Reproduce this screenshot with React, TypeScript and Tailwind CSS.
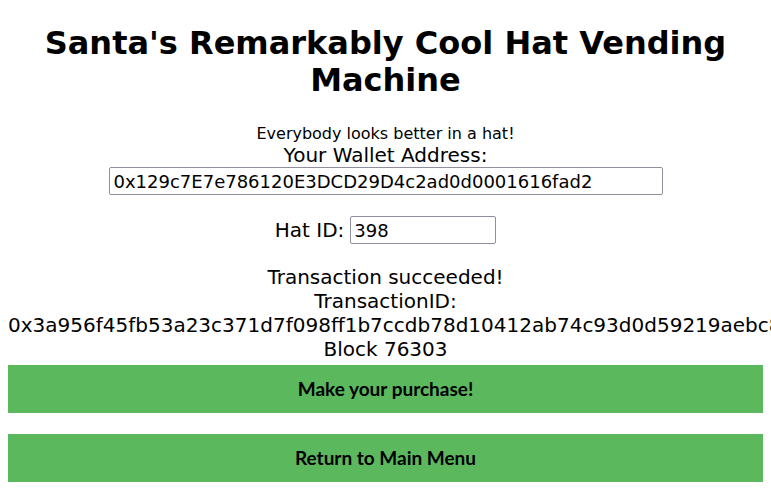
import React from "react";

export default function App() {
  return (
    <div
      className="p-2 text-center text-black bg-white min-h-[497px]"
      style={{ fontFamily: '"DejaVu Sans", sans-serif' }}
    >
      <h1 className="mt-[17px] text-[32px] font-bold leading-[37px]">
        Santa's Remarkably Cool Hat Vending Machine
      </h1>
      <p className="mt-[25px] text-[16px] leading-[20px]">Everybody looks better in a hat!</p>
      <div className="text-[20px] leading-[23px]">Your Wallet Address:</div>
      <div className="flex justify-center">
        <input
          readOnly
          value="0x129c7E7e786120E3DCD29D4c2ad0d0001616fad2"
          className="w-[554px] h-[28px] border border-[#8f8f9d] rounded-[2px] px-[4px] text-[18px] leading-[21px] outline-none"
          style={{ fontFamily: '"DejaVu Sans", sans-serif' }}
        />
      </div>
      <div className="mt-[21px] flex justify-center items-center gap-[6px] text-[20px] leading-[23px]">
        <span>Hat ID:</span>
        <input
          readOnly
          value="398"
          className="w-[146px] h-[28px] border border-[#8f8f9d] rounded-[2px] px-[3px] text-[18px] leading-[21px] outline-none"
          style={{ fontFamily: '"DejaVu Sans", sans-serif' }}
        />
      </div>
      <div className="mt-[21px] text-[20px] leading-[24px]">
        <div>Transaction succeeded!</div>
        <div>TransactionID:</div>
        <div className="whitespace-nowrap text-left">
          0x3a956f45fb53a23c371d7f098ff1b7ccdb78d10412ab74c93d0d59219aebc8e1
        </div>
        <div>Block 76303</div>
      </div>
      <button
        className="mt-[4px] block w-full h-[48px] bg-[#5cb85c] text-black text-[19px] font-bold"
        style={{ fontFamily: 'Lato, "Open Sans", sans-serif' }}
      >
        Make your purchase!
      </button>
      <button
        className="mt-[21px] block w-full h-[48px] bg-[#5cb85c] text-black text-[19px] font-bold"
        style={{ fontFamily: 'Lato, "Open Sans", sans-serif' }}
      >
        Return to Main Menu
      </button>
    </div>
  );
}
